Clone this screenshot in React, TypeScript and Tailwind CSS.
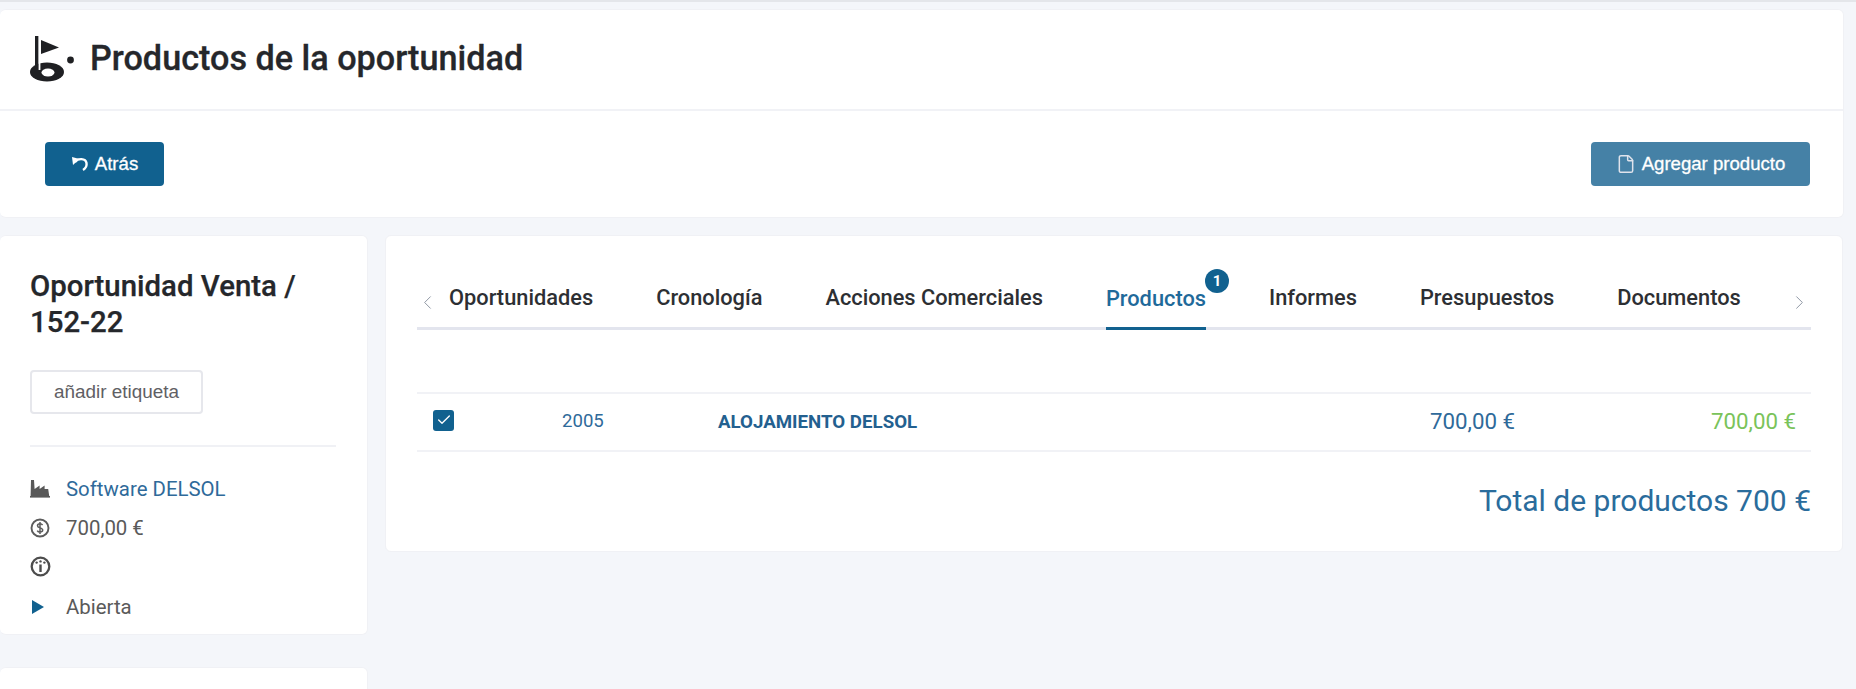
import { ChevronLeft, ChevronRight, File, Check } from "lucide-react";

const roboto = "font-['Roboto',sans-serif]";
const arial = "font-['Liberation_Sans',Arial,sans-serif]";

function Logo() {
  return (
    <svg width="46" height="48" viewBox="0 0 46 48" className="shrink-0">
      <ellipse cx="19" cy="36" rx="17" ry="9.5" fill="#1f2023" />
      <ellipse cx="20" cy="36.5" rx="6.5" ry="4" fill="#fff" />
      <rect x="7" y="0" width="3.6" height="34" fill="#1f2023" />
      <rect x="10.6" y="0" width="1.8" height="34" fill="#fff" />
      <polygon points="13,4 31,11.5 13,18" fill="#1f2023" />
      <circle cx="42.5" cy="24" r="3.4" fill="#1f2023" />
    </svg>
  );
}

function UndoIcon() {
  return (
    <svg width="19" height="18" viewBox="0 0 19 18" fill="none" className="shrink-0">
      <path d="M4 7 C7 3 14.5 3 15.5 8 C16 11 14.5 13.5 12 15" stroke="#fff" strokeWidth="2.4" />
      <polygon points="1,2 8.5,4 2,10" fill="#fff" />
    </svg>
  );
}

function FactoryIcon() {
  return (
    <svg width="20" height="18" viewBox="0 0 20 18" className="shrink-0">
      <path d="M1 0h3l.6 9 5-3.6V9l5-3.6V9h3.6l1 7H0.6z" fill="#585858" />
      <rect x="0" y="16" width="20" height="1.6" fill="#585858" />
    </svg>
  );
}

function DollarIcon() {
  return (
    <svg width="20" height="20" viewBox="0 0 20 20" fill="none" className="shrink-0">
      <circle cx="10" cy="10" r="8.5" stroke="#5c5c5c" strokeWidth="1.9" />
      <path d="M12.6 7.2c-.6-1-1.5-1.4-2.6-1.4-1.4 0-2.5.8-2.5 2s1 1.7 2.5 2.1 2.7 1 2.7 2.2-1.2 2-2.7 2c-1.2 0-2.2-.5-2.8-1.5M10 4v12" stroke="#5c5c5c" strokeWidth="1.5" />
    </svg>
  );
}

function InfoIcon() {
  return (
    <svg width="21" height="21" viewBox="0 0 21 21" fill="none" className="shrink-0">
      <circle cx="10.5" cy="10.5" r="8.8" stroke="#4d4d4d" strokeWidth="2.3" />
      <rect x="9.3" y="8.5" width="2.4" height="7.5" fill="#4d4d4d" />
      <circle cx="10.5" cy="5.4" r="1.2" fill="#4d4d4d" />
      <circle cx="6.6" cy="6.6" r="1.2" fill="#4d4d4d" />
      <circle cx="14.4" cy="6.6" r="1.2" fill="#4d4d4d" />
    </svg>
  );
}

function PlayIcon() {
  return (
    <svg width="16" height="16" viewBox="0 0 16 16" className="shrink-0">
      <polygon points="2,1 14,8 2,15" fill="#11618f" />
    </svg>
  );
}

function InfoRow({ icon, children, className }: { icon: React.ReactNode; children?: React.ReactNode; className: string }) {
  return (
    <div className={"flex items-center " + className}>
      <span className="w-[36px] flex items-center">{icon}</span>
      {children}
    </div>
  );
}

const tabs = ["Oportunidades", "Cronología", "Acciones Comerciales", "Productos", "Informes", "Presupuestos", "Documentos"];

export default function App() {
  return (
    <div className={"h-[689px] overflow-hidden bg-[#f4f6fa] border-t-2 border-[#e4e6ea] pt-[7px] pr-[12px] " + roboto}>
      <section className="bg-white rounded-md border border-[#f0f1f5] border-l-0 h-[209px] flex flex-col">
        <header className="h-[101px] flex items-center gap-[16px] pl-[28px] border-b-2 border-[#f1f2f6]">
          <Logo />
          <h1 className="text-[34.2px] font-medium text-[#25272b] leading-none -mt-[3px] [-webkit-text-stroke:0.3px_#25272b]">Productos de la oportunidad</h1>
        </header>
        <div className={"flex-1 flex items-start justify-between pt-[31px] pl-[45px] pr-[33px] " + arial}>
          <button className="h-[44px] w-[119px] bg-[#11618f] rounded-[4px] text-white text-[18.6px] flex items-center justify-center gap-[5px] [-webkit-text-stroke:0.3px_#fff]">
            <UndoIcon />
            Atrás
          </button>
          <button className="h-[44px] w-[219px] bg-[#4581a6] rounded-[4px] text-white text-[18.6px] flex items-center justify-center gap-[6px] [-webkit-text-stroke:0.3px_#fff]">
            <File size={20} strokeWidth={1.8} className="text-[#dfe3ec]" />
            Agregar producto
          </button>
        </div>
      </section>

      <div className="flex gap-[17px] mt-[17px] items-start">
        <aside className="w-[368px] shrink-0 flex flex-col gap-[32px]">
          <div className="bg-white rounded-md border border-[#f0f1f5] border-l-0 h-[400px] pl-[30px] pr-[31px] pt-[32px]">
            <h2 className="text-[29.4px] leading-[36px] font-medium text-[#25272b] [-webkit-text-stroke:0.25px_#25272b]">
              Oportunidad Venta /<br />152-22
            </h2>
            <button className={"mt-[30px] h-[44px] w-[173px] rounded-[4px] border-2 border-[#e6e7ec] text-[18.9px] text-[#5f6064] " + arial}>
              añadir etiqueta
            </button>
            <div className="mt-[31px] h-[2px] bg-[#f0f1f5]" />
            <div className="pt-[30px] text-[20.4px] text-[#5a5a5a]">
              <InfoRow icon={<FactoryIcon />} className="h-[24px]">
                <span className="text-[#2f6a9a]">Software DELSOL</span>
              </InfoRow>
              <InfoRow icon={<DollarIcon />} className="h-[24px] mt-[15px]">700,00 €</InfoRow>
              <InfoRow icon={<InfoIcon />} className="h-[24px] mt-[14px]" />
              <InfoRow icon={<PlayIcon />} className="h-[24px] mt-[17px]">Abierta</InfoRow>
            </div>
          </div>
          <div className="bg-white rounded-md border border-[#f0f1f5] border-l-0 h-[60px]" />
        </aside>

        <main className="flex-1 mr-[1px] bg-white rounded-md border border-[#f0f1f5] h-[317px] pl-[31px] pr-[31px] pt-[36px]">
          <nav className="relative flex items-end border-b-[3px] border-[#e3e5ee] h-[58px]">
            <ChevronLeft size={23} strokeWidth={1} className="absolute -left-[1px] top-[19px] text-[#8b93a0]" />
            <div className="flex gap-[63px] pl-[32px] text-[21.8px] font-medium text-[#2d2f33] -mb-[3px]">
              {tabs.map((t) => {
                const active = t === "Productos";
                return (
                  <div
                    key={t}
                    className={
                      "relative h-[45px] border-b-[3px] " +
                      (active ? "border-[#11618f] text-[#1f6a9a] leading-[27px]" : "border-transparent leading-[25px]")
                    }
                  >
                    {t}
                    {active && (
                      <span className="absolute -right-[23px] -top-[16px] w-[24px] h-[24px] rounded-full bg-[#11618f] text-white text-[15px] font-bold flex items-center justify-center leading-none">
                        1
                      </span>
                    )}
                  </div>
                );
              })}
            </div>
            <ChevronRight size={23} strokeWidth={1} className="absolute right-[0px] top-[19px] text-[#8b93a0]" />
          </nav>

          <div className="mt-[62px] h-[60px] border-y-2 border-[#f1f2f6] flex items-center text-[#2f6a9a]">
            <span className="ml-[16px] w-[21px] h-[21px] -mt-[4px] rounded-[3px] bg-[#11618f] flex items-center justify-center shrink-0">
              <Check size={16} strokeWidth={2} className="text-white" />
            </span>
            <span className="ml-[108px] w-[156px] text-[18.6px] shrink-0">2005</span>
            <span className="text-[18.7px] font-bold text-[#23608f] flex-1">ALOJAMIENTO DELSOL</span>
            <span className="text-[22.3px] w-[85px] shrink-0 whitespace-nowrap">700,00 €</span>
            <span className="ml-[196px] mr-[15px] text-[22.3px] w-[85px] shrink-0 whitespace-nowrap text-[#7ac35a]">700,00 €</span>
          </div>

          <div className="mt-[29px] text-right text-[30px] leading-[40px] text-[#2a6c9c]">Total de productos 700 €</div>
        </main>
      </div>
    </div>
  );
}
